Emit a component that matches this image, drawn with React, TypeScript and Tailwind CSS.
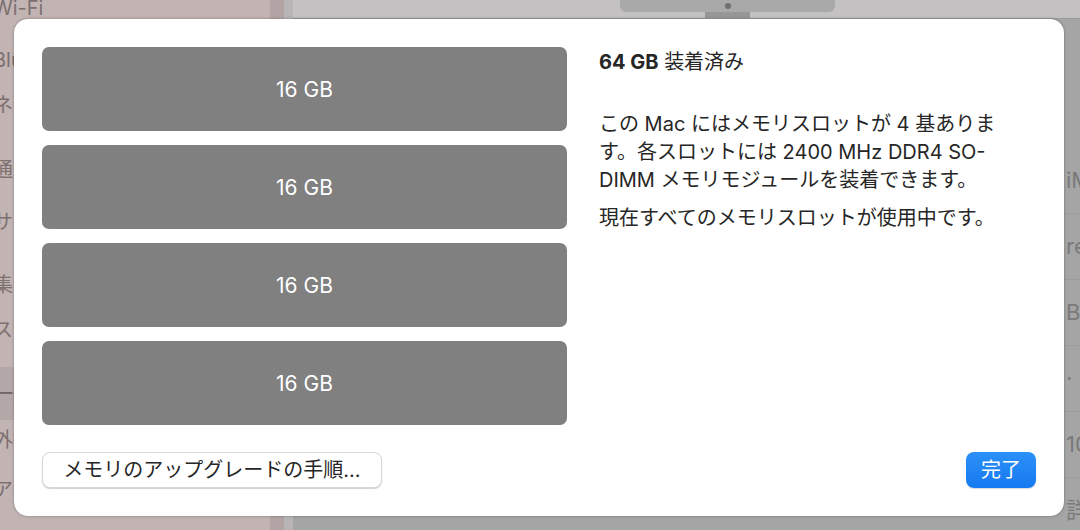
const FONT = "font-['Inter','Noto_Sans_CJK_JP',sans-serif]";

const rightRows = ["iMac", "retina", "B", "·", "10", "詳細"];

function SideItem({ label, className }: { label: string; className: string }) {
  return (
    <p className={`-ml-[7px] h-[24px] whitespace-nowrap text-[20px] leading-[24px] text-[#7d7070] ${className}`}>
      {label}
    </p>
  );
}

function MemorySlot({ size }: { size: string }) {
  return (
    <div className="flex h-[84px] w-[525px] items-center justify-center rounded-[7px] bg-[#808080]">
      <span className="text-[21px] leading-none text-white">{size}</span>
    </div>
  );
}

function Backdrop() {
  return (
    <div className="flex h-full w-full">
      <div className="flex w-[270px] flex-col bg-[#c3b4b4]">
        <SideItem label="Wi-Fi" className="mt-[-4px]" />
        <SideItem label="Bluetooth" className="mt-[28px]" />
        <SideItem label="ネットワーク" className="mt-[21px]" />
        <SideItem label="通知" className="mt-[41px]" />
        <SideItem label="サウンド" className="mt-[28px]" />
        <SideItem label="集中モード" className="mt-[39px]" />
        <SideItem label="スクリーンタイム" className="mt-[21px]" />
        <div className="mt-[25px] flex h-[53px] items-center bg-[#b4a7a7]">
          <p className="-ml-[7px] whitespace-nowrap text-[20px] text-[#6f6464]">一般</p>
        </div>
        <SideItem label="外観" className="mt-[8px]" />
        <SideItem label="アクセシビリティ" className="mt-[26px]" />
      </div>
      <div className="w-[14px] bg-[#b2a4a4]" />
      <div className="w-[9px] bg-[#b9b5b6]" />
      <div className="flex flex-1 flex-col">
        <div className="flex h-[19px] items-start border-b border-[#9c9c9c] bg-[#c3c1c2]">
          <div className="ml-[327px] flex flex-col items-center">
            <div className="flex h-[12px] w-[215px] items-center justify-center rounded-b-[6px] bg-[#a9a9a9]">
              <div className="h-[6px] w-[6px] rounded-full bg-[#6f6f6f]" />
            </div>
            <div className="h-[6px] w-[45px] bg-[#979797]" />
          </div>
        </div>
        <div className="flex flex-1 justify-end bg-[#a5a5a5]">
          <div className="flex w-[16px] flex-col overflow-hidden pt-[129px]">
            {rightRows.map((r, i) => (
              <div
                key={i}
                className="flex h-[66px] shrink-0 items-center whitespace-nowrap border-b border-[#9c9c9c] pl-[2px] text-[22px] text-[#7a7a7a]"
              >
                {r}
              </div>
            ))}
          </div>
        </div>
      </div>
    </div>
  );
}

export default function App() {
  return (
    <div className={`relative h-[530px] w-[1080px] overflow-hidden ${FONT}`}>
      <Backdrop />
      <div className="absolute left-[14px] top-[19px] flex h-[497px] w-[1050px] flex-col rounded-[14px] bg-white px-[28px] pt-[28px] shadow-[0_0_3px_rgba(0,0,0,0.35)]">
        <div className="flex gap-[32px]">
          <div className="flex flex-col gap-[14px]">
            {["16 GB", "16 GB", "16 GB", "16 GB"].map((s, i) => (
              <MemorySlot key={i} size={s} />
            ))}
          </div>
          <div className="flex flex-col pt-[1px] text-[20px] leading-[28px] text-[#262626]">
            <p className="whitespace-nowrap">
              <span className="font-bold">64 GB</span> 装着済み
            </p>
            <div className="mt-[34px]">
              <p className="whitespace-nowrap">この Mac にはメモリスロットが 4 基ありま</p>
              <p className="whitespace-nowrap">す。各スロットには 2400 MHz DDR4 SO-</p>
              <p className="whitespace-nowrap">DIMM メモリモジュールを装着できます。</p>
            </div>
            <p className="mt-[10px] whitespace-nowrap">現在すべてのメモリスロットが使用中です。</p>
          </div>
        </div>
        <div className="mt-[27px] flex items-center justify-between">
          <button className="flex h-[36px] w-[340px] items-center justify-center rounded-[8px] border border-[#d6d6d6] bg-white text-[20px] text-[#262626] shadow-[0_1px_1px_rgba(0,0,0,0.18)]">
            メモリのアップグレードの手順...
          </button>
          <button className="flex h-[36px] w-[70px] items-center justify-center rounded-[8px] bg-gradient-to-b from-[#2c90f8] to-[#1579f1] text-[20px] text-white shadow-[0_1px_1px_rgba(0,0,0,0.15)]">
            完了
          </button>
        </div>
      </div>
    </div>
  );
}
